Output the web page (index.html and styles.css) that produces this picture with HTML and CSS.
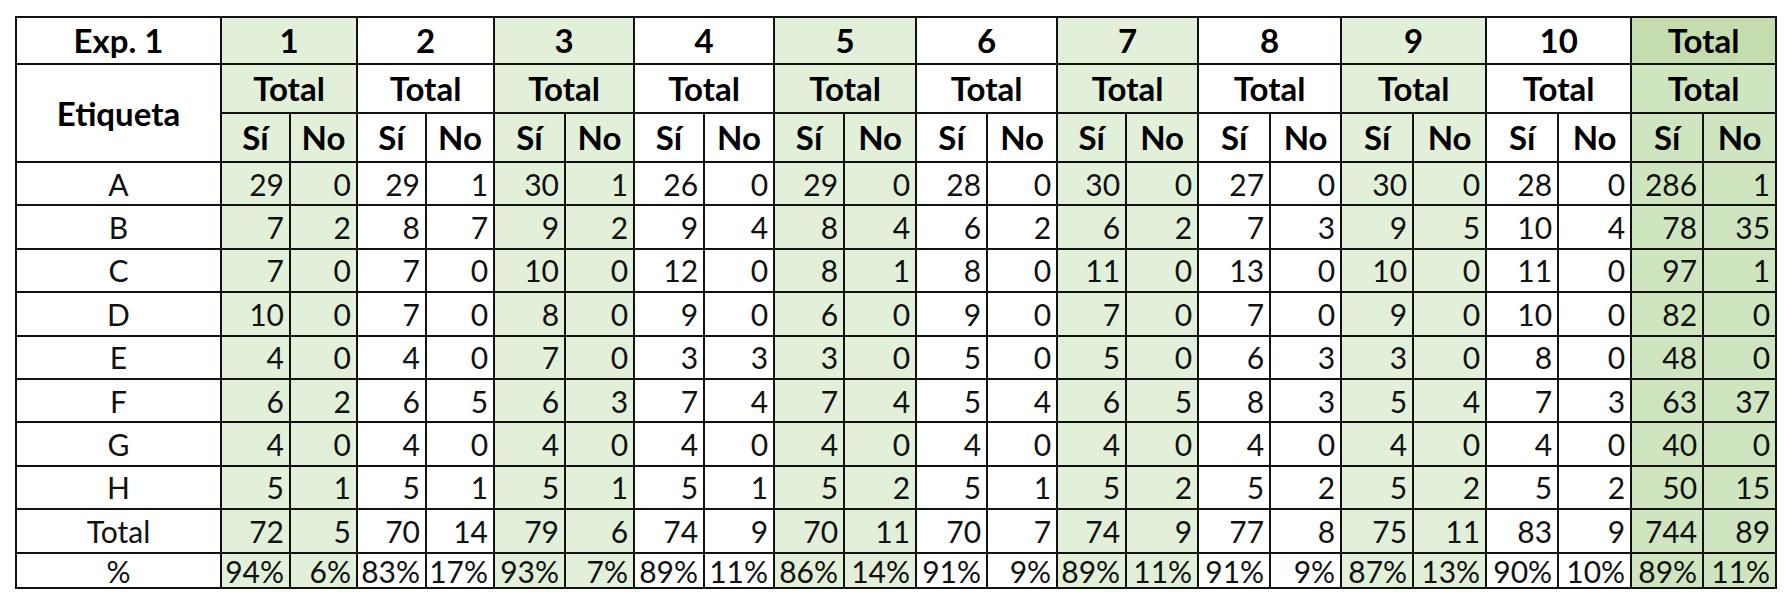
FILE: index.html
```html
<!DOCTYPE html>
<html lang="es">
<head>
<meta charset="utf-8">
<title>Exp. 1</title>
<link rel="stylesheet" href="styles.css">
</head>
<body>
<table class="grid">
  <colgroup>
    <col class="c-label">
    <col class="w69"><col class="w67">
    <col class="w69"><col class="w68">
    <col class="w71"><col class="w69">
    <col class="w70"><col class="w70">
    <col class="w70"><col class="w72">
    <col class="w71"><col class="w70">
    <col class="w69"><col class="w72">
    <col class="w72"><col class="w71">
    <col class="w72"><col class="w73">
    <col class="w72"><col class="w73">
    <col class="w72"><col class="w73">
  </colgroup>
  <thead>
    <tr class="h1">
      <th class="lab">Exp. 1</th>
      <th colspan="2" class="g">1</th>
      <th colspan="2">2</th>
      <th colspan="2" class="g">3</th>
      <th colspan="2">4</th>
      <th colspan="2" class="g">5</th>
      <th colspan="2">6</th>
      <th colspan="2" class="g">7</th>
      <th colspan="2">8</th>
      <th colspan="2" class="g">9</th>
      <th colspan="2">10</th>
      <th colspan="2" class="t t-top">Total</th>
    </tr>
    <tr class="h2">
      <th rowspan="2" class="lab">Etiqueta</th>
      <th colspan="2" class="g">Total</th>
      <th colspan="2">Total</th>
      <th colspan="2" class="g">Total</th>
      <th colspan="2">Total</th>
      <th colspan="2" class="g">Total</th>
      <th colspan="2">Total</th>
      <th colspan="2" class="g">Total</th>
      <th colspan="2">Total</th>
      <th colspan="2" class="g">Total</th>
      <th colspan="2">Total</th>
      <th colspan="2" class="t">Total</th>
    </tr>
    <tr class="h3">
      <th class="g">Sí</th><th class="g">No</th>
      <th>Sí</th><th>No</th>
      <th class="g">Sí</th><th class="g">No</th>
      <th>Sí</th><th>No</th>
      <th class="g">Sí</th><th class="g">No</th>
      <th>Sí</th><th>No</th>
      <th class="g">Sí</th><th class="g">No</th>
      <th>Sí</th><th>No</th>
      <th class="g">Sí</th><th class="g">No</th>
      <th>Sí</th><th>No</th>
      <th class="t">Sí</th><th class="t">No</th>
    </tr>
  </thead>
  <tbody>
    <tr>
      <td class="lab">A</td>
      <td class="g">29</td><td class="g">0</td><td>29</td><td>1</td>
      <td class="g">30</td><td class="g">1</td><td>26</td><td>0</td>
      <td class="g">29</td><td class="g">0</td><td>28</td><td>0</td>
      <td class="g">30</td><td class="g">0</td><td>27</td><td>0</td>
      <td class="g">30</td><td class="g">0</td><td>28</td><td>0</td>
      <td class="t">286</td><td class="t">1</td>
    </tr>
    <tr>
      <td class="lab">B</td>
      <td class="g">7</td><td class="g">2</td><td>8</td><td>7</td>
      <td class="g">9</td><td class="g">2</td><td>9</td><td>4</td>
      <td class="g">8</td><td class="g">4</td><td>6</td><td>2</td>
      <td class="g">6</td><td class="g">2</td><td>7</td><td>3</td>
      <td class="g">9</td><td class="g">5</td><td>10</td><td>4</td>
      <td class="t">78</td><td class="t">35</td>
    </tr>
    <tr>
      <td class="lab">C</td>
      <td class="g">7</td><td class="g">0</td><td>7</td><td>0</td>
      <td class="g">10</td><td class="g">0</td><td>12</td><td>0</td>
      <td class="g">8</td><td class="g">1</td><td>8</td><td>0</td>
      <td class="g">11</td><td class="g">0</td><td>13</td><td>0</td>
      <td class="g">10</td><td class="g">0</td><td>11</td><td>0</td>
      <td class="t">97</td><td class="t">1</td>
    </tr>
    <tr>
      <td class="lab">D</td>
      <td class="g">10</td><td class="g">0</td><td>7</td><td>0</td>
      <td class="g">8</td><td class="g">0</td><td>9</td><td>0</td>
      <td class="g">6</td><td class="g">0</td><td>9</td><td>0</td>
      <td class="g">7</td><td class="g">0</td><td>7</td><td>0</td>
      <td class="g">9</td><td class="g">0</td><td>10</td><td>0</td>
      <td class="t">82</td><td class="t">0</td>
    </tr>
    <tr>
      <td class="lab">E</td>
      <td class="g">4</td><td class="g">0</td><td>4</td><td>0</td>
      <td class="g">7</td><td class="g">0</td><td>3</td><td>3</td>
      <td class="g">3</td><td class="g">0</td><td>5</td><td>0</td>
      <td class="g">5</td><td class="g">0</td><td>6</td><td>3</td>
      <td class="g">3</td><td class="g">0</td><td>8</td><td>0</td>
      <td class="t">48</td><td class="t">0</td>
    </tr>
    <tr>
      <td class="lab">F</td>
      <td class="g">6</td><td class="g">2</td><td>6</td><td>5</td>
      <td class="g">6</td><td class="g">3</td><td>7</td><td>4</td>
      <td class="g">7</td><td class="g">4</td><td>5</td><td>4</td>
      <td class="g">6</td><td class="g">5</td><td>8</td><td>3</td>
      <td class="g">5</td><td class="g">4</td><td>7</td><td>3</td>
      <td class="t">63</td><td class="t">37</td>
    </tr>
    <tr>
      <td class="lab">G</td>
      <td class="g">4</td><td class="g">0</td><td>4</td><td>0</td>
      <td class="g">4</td><td class="g">0</td><td>4</td><td>0</td>
      <td class="g">4</td><td class="g">0</td><td>4</td><td>0</td>
      <td class="g">4</td><td class="g">0</td><td>4</td><td>0</td>
      <td class="g">4</td><td class="g">0</td><td>4</td><td>0</td>
      <td class="t">40</td><td class="t">0</td>
    </tr>
    <tr>
      <td class="lab">H</td>
      <td class="g">5</td><td class="g">1</td><td>5</td><td>1</td>
      <td class="g">5</td><td class="g">1</td><td>5</td><td>1</td>
      <td class="g">5</td><td class="g">2</td><td>5</td><td>1</td>
      <td class="g">5</td><td class="g">2</td><td>5</td><td>2</td>
      <td class="g">5</td><td class="g">2</td><td>5</td><td>2</td>
      <td class="t">50</td><td class="t">15</td>
    </tr>
    <tr>
      <td class="lab">Total</td>
      <td class="g">72</td><td class="g">5</td><td>70</td><td>14</td>
      <td class="g">79</td><td class="g">6</td><td>74</td><td>9</td>
      <td class="g">70</td><td class="g">11</td><td>70</td><td>7</td>
      <td class="g">74</td><td class="g">9</td><td>77</td><td>8</td>
      <td class="g">75</td><td class="g">11</td><td>83</td><td>9</td>
      <td class="t">744</td><td class="t">89</td>
    </tr>
    <tr class="pct">
      <td class="lab">%</td>
      <td class="g">94%</td><td class="g">6%</td><td>83%</td><td>17%</td>
      <td class="g">93%</td><td class="g">7%</td><td>89%</td><td>11%</td>
      <td class="g">86%</td><td class="g">14%</td><td>91%</td><td>9%</td>
      <td class="g">89%</td><td class="g">11%</td><td>91%</td><td>9%</td>
      <td class="g">87%</td><td class="g">13%</td><td>90%</td><td>10%</td>
      <td class="t">89%</td><td class="t">11%</td>
    </tr>
  </tbody>
</table>
</body>
</html>
```
FILE: styles.css
```css
html, body {
  margin: 0;
  padding: 0;
  background: #ffffff;
}

body {
  padding: 16px 0 0 15px;
  font-family: Lato, "Liberation Sans", sans-serif;
  color: #111;
}

.grid {
  border-collapse: collapse;
  table-layout: fixed;
  width: 1760px;
}

.c-label { width: 205px; }
.w67 { width: 67px; }
.w68 { width: 68px; }
.w69 { width: 69px; }
.w70 { width: 70px; }
.w71 { width: 71px; }
.w72 { width: 72px; }
.w73 { width: 73px; }

.grid th,
.grid td {
  border: 2.5px solid #111;
  padding: 0;
  overflow: hidden;
  white-space: nowrap;
}

.grid th {
  font-weight: 700;
  font-size: 33px;
  text-align: center;
  color: #000;
  line-height: 1;
}

.grid td {
  font-size: 30px;
  text-align: right;
  padding-right: 5px;
  line-height: 1;
}

.grid td.lab {
  text-align: center;
  padding-right: 0;
}

.h1 { height: 47px; }
.h2 { height: 49px; }
.h3 { height: 49px; }
.grid tbody tr { height: 43.4px; }
.grid tbody tr.pct { height: 35px; }

.grid tbody tr.pct td {
  vertical-align: top;
  padding-top: 2px;
}

.g { background: #e2efd9; }
.t { background: #cfe5bf; }
.t-top { background: #c4dcae; }
```
